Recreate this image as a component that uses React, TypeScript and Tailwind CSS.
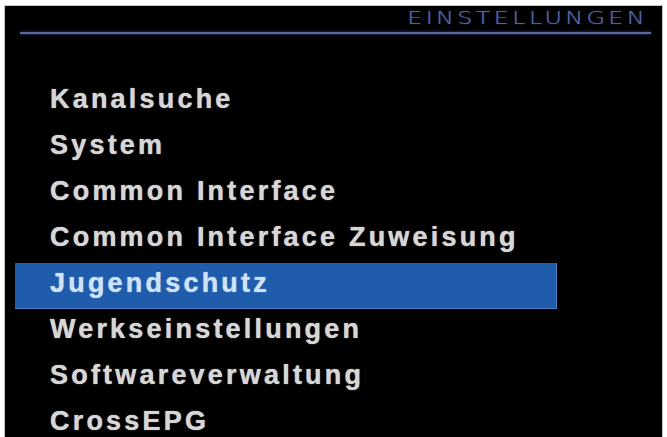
const items = [
  "Kanalsuche",
  "System",
  "Common Interface",
  "Common Interface Zuweisung",
  "Jugendschutz",
  "Werkseinstellungen",
  "Softwareverwaltung",
  "CrossEPG",
];

const selected = 4;

export default function App() {
  return (
    <div className="w-[667px] h-[437px] overflow-hidden bg-white pl-[4px] pt-[5px] pr-[4px] font-['Liberation_Sans',Arial,sans-serif]">
      <div className="h-[432px] overflow-hidden bg-black border-l border-t border-r border-[#c4c4c4] flex flex-col">
        {/* header */}
        <div className="h-[21px] shrink-0 flex justify-end items-end pr-[14px]">
          <span className="font-['DejaVu_Sans',sans-serif] font-extralight text-[18px] leading-none tracking-[2.5px] text-[#5468aa] scale-x-[1.33] origin-right [text-shadow:0_0_1px_#4a5fa8]">
            EINSTELLUNGEN
          </span>
        </div>
        <div className="shrink-0 mt-[5px] ml-[15px] mr-[11px] h-[2px] bg-[#5a689c] shadow-[0_0_3px_#34479a]" />

        {/* menu */}
        <div className="shrink-0 mt-[45px] flex flex-col">
          {items.map((label, i) => (
            <div
              key={label}
              className={
                i === selected
                  ? "shrink-0 h-[46px] leading-[40px] ml-[10px] w-[542px] pl-[35px] bg-[#1f5cac] border-r border-b border-[#4a7cc0] text-[#cfe3f7] text-[27px] font-bold tracking-[3.2px] whitespace-nowrap [text-shadow:0_0_1px_#cfe3f7]"
                  : "shrink-0 h-[46px] leading-[40px] ml-[10px] pl-[35px] text-[#d6d6d6] text-[27px] font-bold tracking-[3.2px] whitespace-nowrap [text-shadow:0_0_1px_#d6d6d6]"
              }
            >
              {label}
            </div>
          ))}
        </div>
      </div>
    </div>
  );
}
